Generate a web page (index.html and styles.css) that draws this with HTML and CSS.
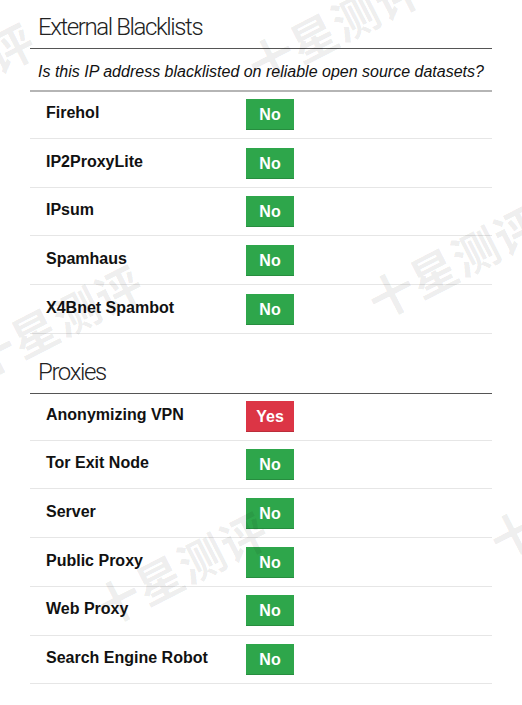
FILE: index.html
```html
<!DOCTYPE html>
<html lang="en">
<head>
  <meta charset="UTF-8">
  <meta name="viewport" content="width=device-width, initial-scale=1.0">
  <title>IP Reputation - Blacklists and Proxies</title>
  <link rel="stylesheet" href="styles.css">
</head>
<body>
  <div class="page">
    <section class="section">
      <h2 class="section-title">External Blacklists</h2>
      <p class="section-lead">Is this IP address blacklisted on reliable open source datasets?</p>
      <div class="check-list">
        <div class="check-row">
          <div class="check-name">Firehol</div>
          <span class="badge badge-no">No</span>
        </div>
        <div class="check-row">
          <div class="check-name">IP2ProxyLite</div>
          <span class="badge badge-no">No</span>
        </div>
        <div class="check-row">
          <div class="check-name">IPsum</div>
          <span class="badge badge-no">No</span>
        </div>
        <div class="check-row">
          <div class="check-name">Spamhaus</div>
          <span class="badge badge-no">No</span>
        </div>
        <div class="check-row">
          <div class="check-name">X4Bnet Spambot</div>
          <span class="badge badge-no">No</span>
        </div>
      </div>
    </section>

    <section class="section">
      <h2 class="section-title">Proxies</h2>
      <div class="check-list">
        <div class="check-row">
          <div class="check-name">Anonymizing VPN</div>
          <span class="badge badge-yes">Yes</span>
        </div>
        <div class="check-row">
          <div class="check-name">Tor Exit Node</div>
          <span class="badge badge-no">No</span>
        </div>
        <div class="check-row">
          <div class="check-name">Server</div>
          <span class="badge badge-no">No</span>
        </div>
        <div class="check-row">
          <div class="check-name">Public Proxy</div>
          <span class="badge badge-no">No</span>
        </div>
        <div class="check-row">
          <div class="check-name">Web Proxy</div>
          <span class="badge badge-no">No</span>
        </div>
        <div class="check-row">
          <div class="check-name">Search Engine Robot</div>
          <span class="badge badge-no">No</span>
        </div>
      </div>
    </section>

    <!-- watermark layer -->
    <div class="watermark" aria-hidden="true">
      <span class="wm wm-1">十星测评</span>
      <span class="wm wm-2">十星测评</span>
      <span class="wm wm-3">十星测评</span>
      <span class="wm wm-4">十星测评</span>
      <span class="wm wm-5">十星测评</span>
      <span class="wm wm-6">十星测评</span>
    </div>
  </div>
</body>
</html>
```

FILE: styles.css
```css
body {
  margin: 0;
  background-color: #fff;
  color: #111;
  font-family: "Liberation Sans", Arial, sans-serif;
}
.page {
  position: relative;
  min-height: 705px;
  padding: 0 30px;
  overflow: hidden;
}
.section + .section {
  margin-top: 11px;
}
.section-title {
  margin: 0;
  padding: 13px 8px 7px;
  font-family: Roboto, "Liberation Sans", sans-serif;
  font-size: 24px;
  font-weight: 300;
  line-height: 28px;
  letter-spacing: -1.4px;
  color: #222;
  border-bottom: 1px solid #555;
}
.section-lead {
  margin: 0;
  padding: 13px 8px 8px;
  font-size: 16px;
  font-style: italic;
  line-height: 20px;
  color: #111;
  border-bottom: 2px solid #b5b5b5;
}
.check-row {
  display: flex;
  align-items: flex-start;
  box-sizing: border-box;
  height: 48.7px;
  padding: 8.5px 16px 0;
  border-bottom: 1px solid #e6e6e6;
}
.check-row:first-child {
  height: 47px;
  padding-top: 7px;
}
.check-name {
  width: 200px;
  padding-top: 5px;
  font-size: 16px;
  font-weight: bold;
  line-height: 18px;
}
.badge {
  display: flex;
  align-items: center;
  justify-content: center;
  box-sizing: border-box;
  width: 48px;
  height: 31px;
  padding-top: 2px;
  font-size: 16px;
  font-weight: bold;
  color: #fff;
  border-bottom: 1px solid rgba(0, 0, 0, 0.15);
}
.badge-no {
  background-color: #2ea64b;
}
.badge-yes {
  background-color: #dc3545;
}
.watermark {
  position: absolute;
  top: 0;
  left: 0;
  right: 0;
  bottom: 0;
  pointer-events: none;
}
.wm {
  position: absolute;
  font-family: "Noto Sans CJK SC", sans-serif;
  font-size: 46px;
  font-weight: bold;
  letter-spacing: 1px;
  line-height: 1;
  white-space: nowrap;
  color: rgba(0, 0, 0, 0.08);
  transform: translate(-50%, -50%) rotate(-27deg);
}
.wm-1 { left: 334px; top: 25px; }
.wm-2 { left: 454px; top: 260px; }
.wm-3 { left: 55px; top: 320px; }
.wm-4 { left: 180px; top: 567px; }
.wm-5 { left: -53px; top: 78px; }
.wm-6 { left: 576px; top: 500px; }
```
